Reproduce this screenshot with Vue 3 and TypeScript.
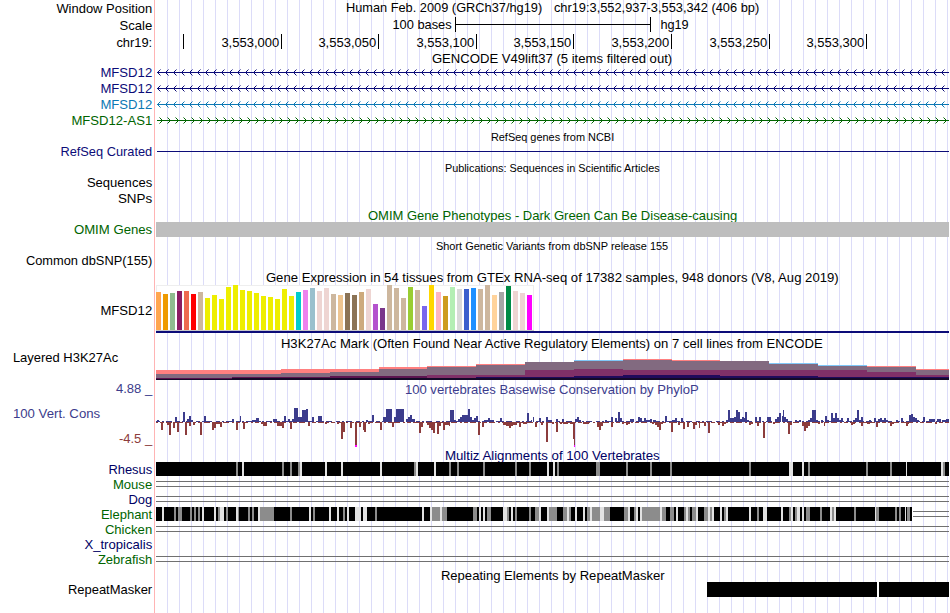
<script setup lang="ts">
interface Label { s: string; x: number; y: number; w: number; c?: string; size?: number }
interface Row { id: string; h: number; kind?: string; label?: Label[]; text?: Label[]; c?: string }
type Rect = { x: number; y: number; w: number; h: number; c: string }

const NAVY = '#0c0c78'
const GREEN = '#006400'
const SKY = '#0c78b4'
const WIG = '#3c3c8c'
const RED = '#8c3c3c'

const lab = (s: string, x: number, y: number, c = '#000', end = 152): Label => ({ s, x: x + 0.4, y, w: end - x - 0.2, c })
const mid = (s: string, x: number, end: number, y: number, c = '#000', size = 13): Label => ({ s, x: x + 0.4, y, w: end - x - 0.7, c, size })

const ticks = [183, 281, 378, 476, 573, 671, 769, 866]
const tickNames = ['3,553,000', '3,553,050', '3,553,100', '3,553,150', '3,553,200', '3,553,250', '3,553,300']

const source: Row[] = [
  { id: 'position', h: 17, label: [lab('Window Position', 56, 13)], text: [mid('Human Feb. 2009 (GRCh37/hg19)', 345.5, 542.5, 12), mid('chr19:3,552,937-3,553,342 (406 bp)', 553.5, 759.5, 12)] },
  { id: 'scale', h: 17, kind: 'scale', label: [lab('Scale', 119, 30)], text: [mid('100 bases', 392, 452, 29), mid('hg19', 660, 689, 29)] },
  { id: 'ruler', h: 16, kind: 'ruler', label: [lab('chr19:', 116, 47)], text: tickNames.map((s, i) => mid(s, ticks[i + 1] - 60, ticks[i + 1] - 1.5, 47)) },
  { id: 'gencode', h: 14, text: [mid('GENCODE V49lift37 (5 items filtered out)', 431.5, 672.5, 63)] },
  { id: 'gene1', h: 16, kind: 'left', c: NAVY, label: [lab('MFSD12', 100, 77, NAVY)] },
  { id: 'gene2', h: 16, kind: 'left', c: NAVY, label: [lab('MFSD12', 100, 93, NAVY)] },
  { id: 'gene3', h: 16, kind: 'left', c: SKY, label: [lab('MFSD12', 100, 109, SKY)] },
  { id: 'gene4', h: 16, kind: 'right', c: GREEN, label: [lab('MFSD12-AS1', 71, 125, GREEN)] },
  { id: 'refseq', h: 16, text: [mid('RefSeq genes from NCBI', 490.5, 614.5, 141, '#000', 11)] },
  { id: 'curated', h: 16, kind: 'line', c: NAVY, label: [lab('RefSeq Curated', 60, 156, NAVY)] },
  { id: 'pubs', h: 14, text: [mid('Publications: Sequences in Scientific Articles', 444.5, 660, 172, '#000', 11)] },
  { id: 'seq', h: 16, label: [lab('Sequences', 86.5, 187)] },
  { id: 'snps', h: 16, label: [lab('SNPs', 117.5, 203)] },
  { id: 'omimTitle', h: 16, text: [mid('OMIM Gene Phenotypes - Dark Green Can Be Disease-causing', 367.5, 737.5, 220, GREEN)] },
  { id: 'omim', h: 16, kind: 'omim', label: [lab('OMIM Genes', 73.5, 234, GREEN)] },
  { id: 'dbsnpTitle', h: 14, text: [mid('Short Genetic Variants from dbSNP release 155', 435.5, 668.5, 250, '#000', 11)] },
  { id: 'dbsnp', h: 16, label: [lab('Common dbSNP(155)', 25.5, 265)] },
  { id: 'gtexTitle', h: 17, text: [mid('Gene Expression in 54 tissues from GTEx RNA-seq of 17382 samples, 948 donors (V8, Aug 2019)', 265.5, 839, 282)] },
  { id: 'gtex', h: 50, kind: 'gtex', label: [lab('MFSD12', 100, 315)] },
  { id: 'h3kTitle', h: 17, text: [mid('H3K27Ac Mark (Often Found Near Active Regulatory Elements) on 7 cell lines from ENCODE', 280.5, 823, 348)] },
  { id: 'h3k', h: 29, kind: 'h3k', label: [lab('Layered H3K27Ac', 12.5, 362, '#000', 118)] },
  { id: 'phyloTitle', h: 17, text: [mid('100 vertebrates Basewise Conservation by PhyloP', 404.5, 699, 394, WIG)], label: [lab('4.88 _', 115.5, 393, WIG)] },
  { id: 'phylo', h: 50, kind: 'phylo', label: [lab('100 Vert. Cons', 12.5, 418, WIG, 100), lab('-4.5 _', 118.5, 443, RED)] },
  { id: 'multizTitle', h: 14, text: [mid('Multiz Alignments of 100 Vertebrates', 444.5, 660, 460, '#000064')] },
  { id: 'rhesus', h: 15, kind: 'rhesus', label: [lab('Rhesus', 108, 474, '#000064')] },
  { id: 'mouse', h: 15, kind: 'double', label: [lab('Mouse', 112.5, 489, GREEN)] },
  { id: 'dog', h: 15, kind: 'double', label: [lab('Dog', 128, 504, '#000064')] },
  { id: 'elephant', h: 15, kind: 'elephant', label: [lab('Elephant', 100.5, 519, GREEN)] },
  { id: 'chicken', h: 15, kind: 'double', label: [lab('Chicken', 104.5, 534, GREEN)] },
  { id: 'frog', h: 15, label: [lab('X_tropicalis', 84, 549, '#000064')] },
  { id: 'zebrafish', h: 15, kind: 'double', label: [lab('Zebrafish', 97.5, 564, GREEN)] },
  { id: 'rmTitle', h: 15, text: [mid('Repeating Elements by RepeatMasker', 440.5, 665, 580)] },
  { id: 'rm', h: 31, kind: 'rm', label: [lab('RepeatMasker', 67.5, 594)] },
]

let top = 0
const rows = source.map((r) => {
  const row = { ...r, y: top }
  top += r.h
  return row
})

// Strand arrows repeat every 8px along an intron line.
const arrows = (kind: string, y: number): string => {
  let d = ''
  for (let x = 157; x < 948; x += 8) {
    d += kind === 'left'
      ? `M${x + 3.5} ${y + 5.5}L${x + 0.5} ${y + 8.5}L${x + 3.5} ${y + 11.5}`
      : `M${x + 2.5} ${y + 5.5}L${x + 5.5} ${y + 8.5}L${x + 2.5} ${y + 11.5}`
  }
  return d
}

// Tissue bars: colour followed by the top edge of the bar.
const tissues = 'ffa54f 292 ee9a00 294 8fbc8f 293 8b1c62 291 ee6a50 291 ff0000 294 cdb79e 292 eeee00 298 eeee00 295 eeee00 299 eeee00 287 eeee00 285 eeee00 290 eeee00 291 eeee00 293 eeee00 296 eeee00 297 eeee00 299 eeee00 289 eeee00 296 00cdcd 292 ee82ee 290 9ac0cd 288 eed5d2 291 eed5d2 288 cdb79e 294 eec591 295 8b7355 293 8b7355 295 cdaa7d 292 eed5d2 289 b452cd 304 7a378b 308 cdb79e 285 cdb79e 288 cdb79e 298 9acd32 287 cdb79e 290 7a67ee 306 ffd700 285 ffb6c1 292 cd9b1d 296 b4eeb4 287 d9d9d9 289 3a5fcd 289 1e90ff 288 cdb79e 289 cdb79e 285 ffd39b 295 a6a6a6 292 008b45 286 eed5d2 291 eed5d2 293 ff00ff 295'.split(' ')
const gtex: Rect[] = []
for (let i = 0; i < tissues.length; i += 2) {
  gtex.push({ x: 156 + (i / 2) * 7, y: +tissues[i + 1], w: 5, h: 330 - +tissues[i + 1], c: '#' + tissues[i] })
}

// Layer tops per signal window: start, outer, outer colour, grey, plum, indigo.
const S = '#ff8080'
const B = '#80c8f8'
const windows: [number, number, string, number, number, number][] = [
  [156, 370, S, 374, 378, 379], [232, 370, S, 374, 377, 378], [281, 369, S, 373, 377, 378], [330, 369, S, 372, 376, 378],
  [379, 367, S, 369, 376, 378], [427, 366, S, 367, 375, 378], [476, 364, S, 365, 375, 377], [525, 362, S, 362, 370, 377],
  [574, 360, B, 361, 369, 376], [623, 359, S, 360, 370, 375], [672, 360, S, 361, 370, 375], [720, 361, S, 361, 370, 376],
  [769, 363, B, 364, 370, 376], [818, 365, B, 366, 370, 377], [867, 366, S, 367, 372, 377], [916, 369, S, 370, 375, 377], [949, 0, S, 0, 0, 0],
]
const h3k: Rect[] = []
windows.slice(0, -1).forEach(([x, a, c, g, p, d], i) => {
  const w = windows[i + 1][0] - x
  const layer = (y: number, fill: string) => h3k.push({ x, y, w, h: 380 - y, c: fill })
  layer(a, c)
  layer(g, '#826a80')
  layer(p, x < 427 ? '#5c1450' : '#803068')
  layer(d, '#200a5c')
  layer(378 + (x < 232 ? 1 : 0), '#140a28')
})

// Runs are written as start, end, value in thirds of a pixel from an origin.
const runs = (origin: number, s: string): number[][] => {
  const n = s.trim().split(/\s+/).map(Number)
  const out: number[][] = []
  for (let i = 0; i < n.length; i += 3) out.push([origin + n[i] / 3, origin + n[i + 1] / 3, n[i + 2]])
  return out
}
const up = [
  ...runs(150, '21 27 255 75 81 246 99 105 231 111 117 252 117 123 243 123 129 255 162 168 243 168 174 258 246 252 252 264 270 258 270 273 243 306 318 255 318 327 249 327 333 257 369 381 252 402 408 243 414 420 252 426 432 252 432 444 219 444 456 246 456 468 225 462 468 228 468 474 222 486 492 246 504 516 243 648 654 255 666 672 240 700 708 246 708 726 222 732 738 246 738 762 222 768 774 252 774 780 246 780 786 240 786 795 252'),
  ...runs(410, '0 3 240 3 9 252 9 15 256 120 132 225 132 138 255 144 150 252 150 156 246 156 174 240 174 180 222 180 186 246 186 192 255 192 198 250 198 204 243 222 234 256 234 240 250 240 252 256 270 276 249 351 357 234 363 366 256 369 372 246 388 394 250 408 414 246 414 426 256 438 444 252 456 462 252 496 502 252 502 507 246 507 513 255 586 592 255 604 610 246 616 622 249 624 630 231 630 636 249 660 672 252 684 690 246 690 696 250 702 708 250 708 720 256 720 726 252 730 738 256 765 771 243 786 794 256 794 800 250'),
  ...runs(680, '3 9 249 138 144 255 144 150 225 150 162 249 162 168 246 168 174 225 174 180 231 180 186 252 186 192 246 192 195 249 195 201 231 201 207 255 225 231 246 237 243 246 261 273 246 285 291 252 291 297 246 297 303 234 306 309 243 309 312 225 312 318 246 318 324 252 345 351 255 357 363 255 384 390 255 390 396 249 396 408 225 408 414 256 423 429 255 435 441 243 441 447 255 453 459 234 459 465 249 465 471 234 471 477 249 477 483 255 483 489 250 501 507 249 519 525 255 525 531 249 531 537 225 537 543 256 543 549 246 567 573 255 582 588 249 594 600 252 600 606 249 606 612 255 612 618 249 618 624 255 648 654 256 663 669 249 687 693 240 693 699 237 699 705 246 705 711 249 711 717 255 729 735 246 747 765 252 771 783 252 786 798 256 798 807 252'),
]
const down = [
  ...runs(150, '33 39 285 51 57 270 57 63 300 69 75 280 81 87 291 105 111 300 117 123 272 129 135 270 150 156 300 186 192 285 192 198 279 198 210 268 210 216 276 258 264 285 279 285 282 333 339 268 339 351 273 381 396 273 396 402 280 420 426 282 474 480 273 525 531 268 561 567 268 573 579 312 579 585 291 600 606 280 615 621 330 627 633 275 639 642 285 642 648 291 654 660 268 690 696 285 727 732 275 806 810 294'),
  ...runs(410, '27 33 294 33 39 275 51 57 270 57 63 279 63 69 285 69 75 294 81 87 297 87 93 273 99 105 285 105 117 270 117 120 273 204 210 300 216 222 276 280 288 270 288 297 273 297 303 279 303 309 273 309 321 270 327 333 276 340 350 268 375 381 276 393 399 270 408 414 321 426 432 268 438 444 291 450 456 268 460 474 268 480 488 268 489 492 312 492 495 330 519 537 268 561 567 276 567 573 285 573 579 273 604 610 276 636 642 268 648 654 270 654 660 268 726 732 268 735 741 270 741 747 276 747 753 285 753 759 268 783 789 291 803 810 270'),
  ...runs(680, '9 15 282 21 27 276 39 45 282 45 51 270 57 60 279 72 78 273 84 90 294 114 120 270 126 132 273 132 138 268 207 213 270 213 219 267 231 237 273 249 255 309 279 285 267 324 330 297 330 336 270 366 372 273 372 378 288 378 384 279 384 390 273 414 420 267 432 435 273 513 519 270 519 525 267 543 549 273 560 570 267 588 594 276 630 636 273 636 642 268 642 654 265 666 678 265 678 684 273 684 687 267 765 771 267'),
]
const phylo: Rect[] = [
  ...up.map(([a, b, v]) => ({ x: a, y: Math.round(335 + v / 3), w: b - a, h: 422 - Math.round(335 + v / 3), c: WIG })),
  ...down.map(([a, b, v]) => ({ x: a, y: 422, w: b - a, h: Math.max(1, Math.round(335 + v / 3) - 422), c: RED })),
  { x: 355, y: 445, w: 2, h: 2, c: '#ff00ff' },
  { x: 574, y: 445, w: 1, h: 2, c: '#ff00ff' },
]

// Alignment shading: 0 is a mid-grey mismatch, 1 a pale gap.
const shade = (list: number[][], y: number): Rect[] =>
  list.map(([a, b, v]) => ({ x: a, y, w: b - a, h: 14, c: v ? '#e2e2e2' : '#8c8c8c' }))
const rhesus: Rect[] = [{ x: 156, y: 462, w: 793, h: 14, c: '#000' }, ...shade([
  ...runs(150, '258 264 0 276 282 1 396 402 0 420 426 0 444 450 0 450 456 1 525 531 1 573 579 1 690 696 1'),
  ...runs(410, '12 18 0 18 24 1 72 78 1 117 123 0 141 147 0 219 225 0 315 321 0 357 363 0 411 417 1 429 435 1 441 447 0 558 570 0 648 654 0 720 726 0 780 786 0'),
  ...runs(680, '207 213 0 327 339 1 366 372 1 384 390 0 558 564 0 630 636 0 678 681 1 783 789 1 789 795 0'),
], 462)]
const elephant: Rect[] = [{ x: 156, y: 507, w: 756, h: 14, c: '#000' }, ...shade([
  ...runs(150, '36 42 1 72 78 0 84 96 0 120 126 0 132 138 0 144 150 0 156 162 1 192 198 1 204 210 0 210 222 1 228 234 0 258 264 1 264 267 0 294 300 0 306 312 0 324 330 1 330 372 0 420 426 0 477 483 1 489 495 0 537 543 1 561 567 1 579 585 0 591 597 1 615 633 1 639 651 1 675 681 0'),
  ...runs(410, '36 42 1 60 66 1 66 90 0 90 96 1 96 111 0 189 201 0 207 213 1 219 225 1 231 243 0 280 291 1 291 297 0 303 309 1 315 321 0 357 363 0 375 387 0 387 393 1 411 417 1 417 441 0 459 471 0 471 477 1 477 483 0 495 501 1 519 525 1 531 540 0 540 546 1 546 570 0 570 582 1 582 600 0 642 654 0 654 660 1 672 678 0 678 684 1 690 696 1 696 750 0 750 756 1 756 768 0 780 792 0 798 804 1'),
  ...runs(680, '12 18 0 18 24 1 24 30 0 36 48 0 48 54 1 72 84 0 84 90 1 90 96 0 96 102 1 120 126 1 132 138 0 138 144 1 207 213 1 231 237 0 249 261 1 303 309 1 327 333 0 333 339 1 345 351 0 351 360 1 366 372 1 378 390 0 420 426 0 450 456 1 456 462 0 462 468 1 522 528 0 585 588 1 588 597 0 645 651 0 657 663 0 675 678 1 681 690 0'),
], 507)]

const fill = (x: number, y: number, w: number, h: number, c: string): Rect => ({ x, y, w, h, c })
const shapes = (r: Row & { y: number }): Rect[] => {
  switch (r.kind) {
    case 'scale': return [fill(455, 17, 1, 15, '#000'), fill(455, 24, 196, 1, '#000'), fill(650, 17, 1, 15, '#000')]
    case 'ruler': return ticks.map((x) => fill(x, 34, 1, 15, '#000'))
    case 'left':
    case 'right': return [fill(157, r.y + 8, 792, 1, r.c!)]
    case 'line': return [fill(157, 151, 792, 1, r.c!)]
    case 'omim': return [fill(156, 222, 793, 15, '#bebebe')]
    case 'gtex': return [fill(156, 285, 378, 46, '#eeeeee'), fill(157, 286, 376, 44, '#fff'), fill(156, 330, 378, 1, '#c8c8c8'), ...gtex, fill(156, 331, 793, 2, NAVY)]
    case 'h3k': return h3k
    case 'phylo': return phylo
    case 'rhesus': return rhesus
    case 'elephant': return [...elephant, fill(913, 511, 36, 1, '#707070'), fill(913, 516, 36, 1, '#707070')]
    case 'double': return [fill(156, r.y + 4, 793, 1, '#707070'), fill(156, r.y + 9, 793, 1, '#707070')]
    case 'rm': return [fill(707, 582, 242, 15, '#000'), fill(877, 582, 2, 15, '#fff')]
    default: return []
  }
}
</script>

<template>
  <main class="browser">
    <section v-for="r in rows" :key="r.id" class="row">
      <svg class="side" width="154" :height="r.h" :viewBox="`0 ${r.y} 154 ${r.h}`">
        <text v-for="t in r.label" :key="t.s" :x="t.x" :y="t.y" :fill="t.c" :textLength="t.w" lengthAdjust="spacingAndGlyphs">{{ t.s }}</text>
      </svg>
      <svg class="track" width="793" :height="r.h" :viewBox="`156 ${r.y} 793 ${r.h}`">
        <g v-if="r.kind === 'phylo'" fill="none" shape-rendering="crispEdges">
          <path d="M156 421.5H949" :stroke="WIG" stroke-dasharray="4 2 2 2 6 4" />
          <path d="M156 422.5H949" :stroke="RED" stroke-dasharray="2 2 4 2 6 3" />
        </g>
        <path v-if="r.kind === 'left' || r.kind === 'right'" :d="arrows(r.kind, r.y)" fill="none" :stroke="r.c" stroke-width="1" />
        <g shape-rendering="crispEdges">
          <rect v-for="(s, i) in shapes(r)" :key="i" :x="s.x" :y="s.y" :width="s.w" :height="s.h" :fill="s.c" />
        </g>
        <text v-for="t in r.text" :key="t.s" :x="t.x" :y="t.y" :fill="t.c" :class="{ small: t.size === 11 }" :textLength="t.w" lengthAdjust="spacingAndGlyphs">{{ t.s }}</text>
      </svg>
    </section>
  </main>
</template>

<style>
body { margin: 0; background: #fff; }
</style>

<style scoped>
.browser {
  width: 950px;
  height: 613px;
  overflow: hidden;
  background:
    linear-gradient(#ffb4b4, #ffb4b4) 154px 0 / 1px 100% no-repeat,
    linear-gradient(#fff, #fff) 0 0 / 167px 100% no-repeat,
    repeating-linear-gradient(90deg, #dcdcf8 0 1px, transparent 1px 12px) 167px 0 / 783px 100% no-repeat;
  font-family: "Liberation Sans", Arial, sans-serif;
}
.row { display: flex; gap: 2px; }
svg { display: block; flex: none; overflow: visible; }
text { font-size: 13.2px; white-space: pre; }
.small { font-size: 11px; }
</style>
